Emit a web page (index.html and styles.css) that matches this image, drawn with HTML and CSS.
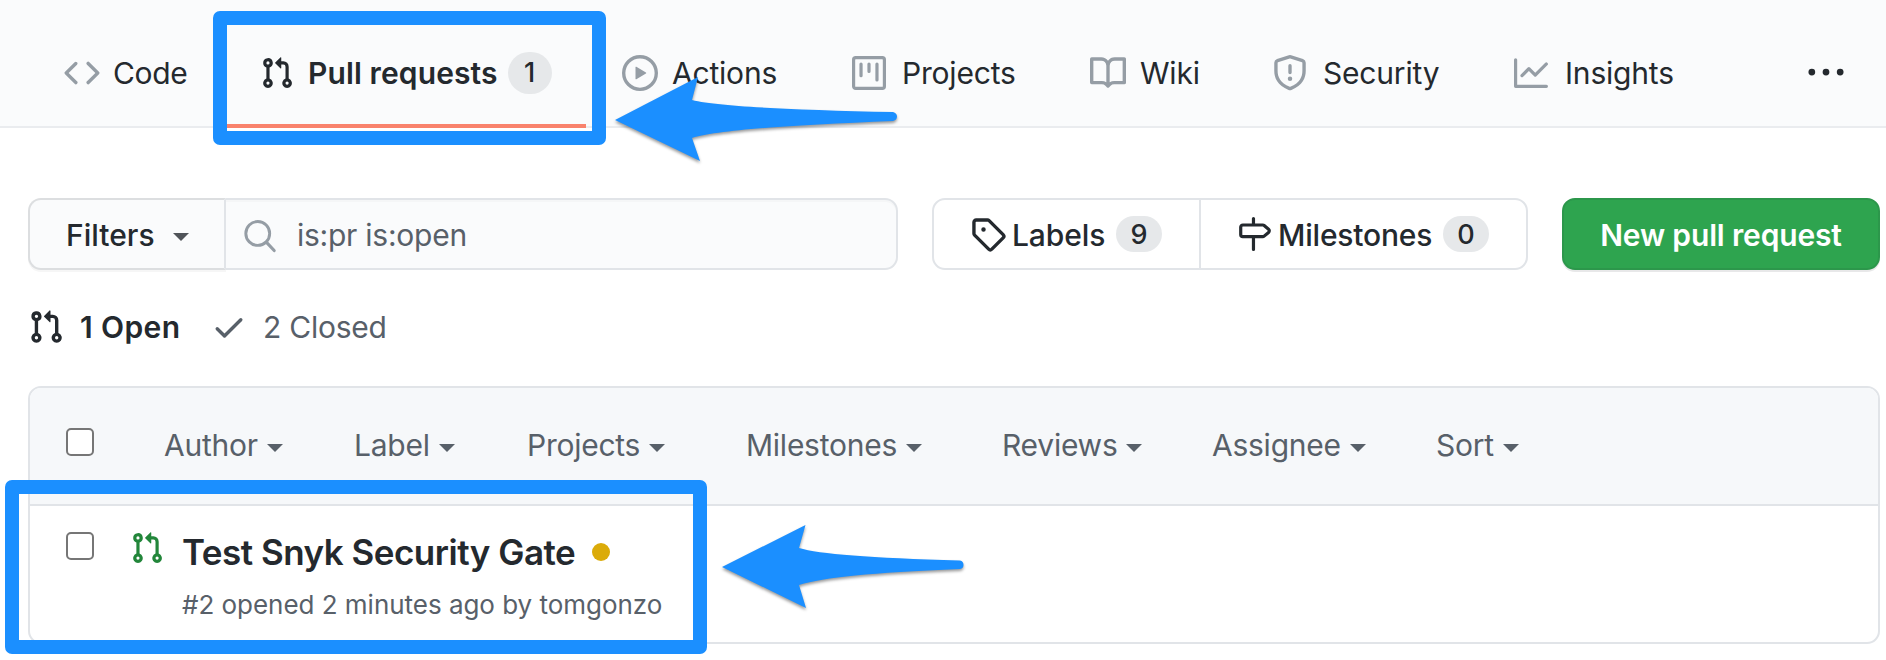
FILE: index.html
```html
<!DOCTYPE html>
<html lang="en">
<head>
<meta charset="utf-8">
<title>Pull requests</title>
<link rel="stylesheet" href="styles.css">
</head>
<body>
<svg width="0" height="0" class="defs" aria-hidden="true">
  <symbol id="pr" viewBox="0 0 16 16"><path fill-rule="evenodd" d="M7.177 3.073L9.573.677A.25.25 0 0110 .854v4.792a.25.25 0 01-.427.177L7.177 3.427a.25.25 0 010-.354zM3.75 2.5a.75.75 0 100 1.5.75.75 0 000-1.5zm-2.25.75a2.25 2.25 0 113 2.122v5.256a2.251 2.251 0 11-1.5 0V5.372A2.25 2.25 0 011.5 3.25zM11 2.5h-1V4h1a1 1 0 011 1v5.628a2.251 2.251 0 101.5 0V5A2.5 2.5 0 0011 2.5zm1 10.25a.75.75 0 111.5 0 .75.75 0 01-1.5 0zM3.75 12a.75.75 0 100 1.5.75.75 0 000-1.5z"/></symbol>
</svg>

<nav class="nav">
  <a class="tab"><svg class="icon" viewBox="0 0 16 16"><path fill-rule="evenodd" d="M4.72 3.22a.75.75 0 011.06 1.06L2.06 8l3.72 3.72a.75.75 0 11-1.06 1.06L.47 8.53a.75.75 0 010-1.06l4.25-4.25zm6.56 0a.75.75 0 10-1.06 1.06L13.94 8l-3.72 3.72a.75.75 0 101.06 1.06l4.25-4.25a.75.75 0 000-1.06l-4.25-4.25z"/></svg><span>Code</span></a>
  <a class="tab tab-current"><svg class="icon icon-sm"><use href="#pr"/></svg><span>Pull requests</span><span class="count">1</span></a>
  <a class="tab"><svg class="icon" viewBox="0 0 16 16"><path fill-rule="evenodd" d="M1.5 8a6.5 6.5 0 1113 0 6.5 6.5 0 01-13 0zM8 0a8 8 0 100 16A8 8 0 008 0zM6.379 5.227A.25.25 0 006 5.442v5.117a.25.25 0 00.379.214l4.264-2.559a.25.25 0 000-.428L6.379 5.227z"/></svg><span>Actions</span></a>
  <a class="tab"><svg class="icon icon-sm" viewBox="0 0 16 16"><path fill-rule="evenodd" d="M1.75 0A1.75 1.75 0 000 1.75v12.5C0 15.216.784 16 1.75 16h12.5A1.75 1.75 0 0016 14.25V1.75A1.75 1.75 0 0014.25 0H1.75zM1.5 1.75a.25.25 0 01.25-.25h12.5a.25.25 0 01.25.25v12.5a.25.25 0 01-.25.25H1.75a.25.25 0 01-.25-.25V1.75zM11.75 3a.75.75 0 00-.75.75v7.5a.75.75 0 001.5 0v-7.5a.75.75 0 00-.75-.75zm-8.25.75a.75.75 0 011.5 0v5.5a.75.75 0 01-1.5 0v-5.5zM8 3a.75.75 0 00-.75.75v3.5a.75.75 0 001.5 0v-3.5A.75.75 0 008 3z"/></svg><span>Projects</span></a>
  <a class="tab"><svg class="icon" viewBox="0 0 16 16"><path fill-rule="evenodd" d="M0 1.75A.75.75 0 01.75 1h4.253c1.227 0 2.317.59 3 1.501A3.744 3.744 0 0111.006 1h4.245a.75.75 0 01.75.75v10.5a.75.75 0 01-.75.75h-4.507a2.25 2.25 0 00-1.591.659l-.622.621a.75.75 0 01-1.06 0l-.622-.621A2.25 2.25 0 005.258 13H.75a.75.75 0 01-.75-.75V1.75zm8.755 3a2.25 2.25 0 012.25-2.25H14.5v9h-3.757c-.71 0-1.4.201-1.992.572l.004-7.322zm-1.504 7.324l.004-5.073-.002-2.253A2.25 2.25 0 005.003 2.5H1.5v9h3.757a3.75 3.75 0 011.994.574z"/></svg><span>Wiki</span></a>
  <a class="tab tab-wide"><svg class="icon" viewBox="0 0 16 16"><path fill-rule="evenodd" d="M7.467.133a1.75 1.75 0 011.066 0l5.25 1.68A1.75 1.75 0 0115 3.48V7c0 1.566-.32 3.182-1.303 4.682-.983 1.498-2.585 2.813-5.032 3.855a1.7 1.7 0 01-1.33 0c-2.447-1.042-4.049-2.357-5.032-3.855C1.32 10.182 1 8.566 1 7V3.48a1.75 1.75 0 011.217-1.667l5.25-1.68zm.61 1.429a.25.25 0 00-.153 0l-5.25 1.68a.25.25 0 00-.174.238V7c0 1.358.275 2.666 1.057 3.86.784 1.194 2.121 2.34 4.366 3.297a.2.2 0 00.154 0c2.245-.956 3.582-2.104 4.366-3.298C13.225 9.666 13.5 8.36 13.5 7V3.48a.25.25 0 00-.174-.237l-5.25-1.68zM9 10.5a1 1 0 11-2 0 1 1 0 012 0zm-.25-5.75a.75.75 0 10-1.5 0v3a.75.75 0 001.5 0v-3z"/></svg><span>Security</span></a>
  <a class="tab tab-wide"><svg class="icon icon-sm" viewBox="0 0 16 16"><path fill-rule="evenodd" d="M1.5 1.75a.75.75 0 00-1.5 0v12.5c0 .414.336.75.75.75h14.5a.75.75 0 000-1.5H1.5V1.75zm14.28 2.53a.75.75 0 00-1.06-1.06L10 7.94 7.53 5.47a.75.75 0 00-1.06 0L3.22 8.72a.75.75 0 001.06 1.06L7 7.06l2.47 2.47a.75.75 0 001.06 0l5.25-5.25z"/></svg><span>Insights</span></a>
  <a class="tab more"><svg class="icon" viewBox="0 0 16 16"><circle cx="1.7" cy="7.6" r="1.5"/><circle cx="8" cy="7.6" r="1.5"/><circle cx="14.3" cy="7.6" r="1.5"/></svg></a>
</nav>

<main class="content">
  <div class="toolbar">
    <div class="search">
      <button class="filters"><span>Filters</span><i class="caret"></i></button>
      <div class="query"><svg class="icon" viewBox="0 0 16 16"><circle cx="7" cy="7.3" r="5.3" fill="none" stroke="currentColor" stroke-width="1.3"/><path d="M10.900 11.300l3.400 3.600" fill="none" stroke="currentColor" stroke-width="1.4" stroke-linecap="round"/></svg><span>is:pr is:open</span></div>
    </div>
    <div class="subnav">
      <a class="sub"><svg class="icon" viewBox="0 0 16 16"><path fill-rule="evenodd" d="M2.5 7.775V2.75a.25.25 0 01.25-.25h5.025a.25.25 0 01.177.073l6.25 6.25a.25.25 0 010 .354l-5.025 5.025a.25.25 0 01-.354 0l-6.25-6.25a.25.25 0 01-.073-.177zm-1.5 0V2.75C1 1.784 1.784 1 2.75 1h5.025c.464 0 .91.184 1.238.513l6.25 6.25a1.75 1.75 0 010 2.474l-5.026 5.026a1.75 1.75 0 01-2.474 0l-6.25-6.25A1.75 1.75 0 011 7.775zM6 5a1 1 0 100 2 1 1 0 000-2z"/></svg><span class="sub-label">Labels</span><span class="count">9</span></a>
      <a class="sub sub-milestones"><svg class="icon icon-sm" viewBox="0 0 16 16"><path fill-rule="evenodd" d="M7.75 0a.75.75 0 01.75.75V3h3.634c.414 0 .814.147 1.13.414l2.07 1.75a1.75 1.75 0 010 2.672l-2.07 1.75a1.75 1.75 0 01-1.13.414H8.5v5.25a.75.75 0 11-1.5 0V10H2.75A1.75 1.75 0 011 8.25v-3.5C1 3.784 1.784 3 2.75 3H7V.75A.75.75 0 017.75 0zm0 8.5h4.384a.25.25 0 00.161-.06l2.07-1.75a.25.25 0 000-.38l-2.07-1.75a.25.25 0 00-.161-.06H2.75a.25.25 0 00-.25.25v3.5c0 .138.112.25.25.25h5z"/></svg><span class="sub-label">Milestones</span><span class="count">0</span></a>
    </div>
    <button class="primary">New pull request</button>
  </div>

  <div class="states">
    <a class="state-open"><svg class="icon"><use href="#pr"/></svg><span>1 Open</span></a>
    <a class="state-closed"><svg class="icon" viewBox="0 0 16 16"><path fill-rule="evenodd" d="M13.78 4.22a.75.75 0 010 1.06l-7.25 7.25a.75.75 0 01-1.06 0L2.22 9.28a.75.75 0 011.06-1.06L6 10.94l6.72-6.72a.75.75 0 011.06 0z"/></svg><span>2 Closed</span></a>
  </div>

  <section class="list">
    <header class="list-head">
      <i class="check"></i>
      <span class="sort">Author<i class="caret"></i></span>
      <span class="sort">Label<i class="caret"></i></span>
      <span class="sort">Projects<i class="caret"></i></span>
      <span class="sort">Milestones<i class="caret"></i></span>
      <span class="sort">Reviews<i class="caret"></i></span>
      <span class="sort">Assignee<i class="caret"></i></span>
      <span class="sort">Sort<i class="caret"></i></span>
    </header>
    <article class="row">
      <i class="check"></i>
      <svg class="icon icon-sm row-icon"><use href="#pr"/></svg>
      <div class="row-text">
        <h3 class="title"><span>Test Snyk Security Gate</span><i class="dot"></i></h3>
        <p class="meta">#2 opened 2 minutes ago by tomgonzo</p>
      </div>
    </article>
  </section>
</main>

<div class="frame frame-tab"></div>
<div class="frame frame-row"></div>
<svg class="arrows" viewBox="0 0 1886 660">
  <path d="M615 120L698 77L692 100C720 107 800 110 893 112Q897 113 897 116.500Q897 120 893 121C800 125 722 129 692 138L700 161Z"/>
  <path d="M722 567L805.500 525L799 548C819 554 870 558 960 560.500Q963.500 561 963.500 565Q963.500 568.500 960 569C870 573 825 577 799 585L806 608Z"/>
</svg>
</body>
</html>
```

FILE: styles.css
```css
* { box-sizing: border-box; }
body {
  margin: 0;
  width: 1886px;
  height: 660px;
  overflow: hidden;
  background: #fff;
  color: #24292e;
  font: 400 30px/36px Inter, "Liberation Sans", sans-serif;
}
.defs { position: absolute; }
.icon { width: 36px; height: 36px; flex: none; fill: currentColor; }
.icon-sm { width: 34px; height: 34px; margin-right: 2px; }

.nav {
  display: grid;
  grid-template-columns: 163px 395px 230px 238px 182px 242px 294px 40px;
  height: 128px;
  padding-left: 64px;
  background: #fafbfc;
  border-bottom: 2px solid #eaecef;
}
.tab { display: flex; align-items: center; gap: 14px; padding-top: 20px; height: 126px; white-space: nowrap; letter-spacing: -.2px; }
.tab .icon { color: #959da5; }
.tab:first-child { gap: 13px; letter-spacing: -.3px; }
.tab-wide { gap: 15px; }
.tab-current {
  width: 359px;
  height: 128px;
  padding: 22px 0 0 33px;
  border-bottom: 4px solid #f9826c;
  font-weight: 600;
  letter-spacing: .12px;
}
.tab-current .icon { margin-right: 0; }
.tab-current .icon, .more .icon { color: #24292e; }
.count {
  width: 44px;
  height: 42px;
  border-radius: 21px;
  background: #e6e8ea;
  font-size: 27px;
  font-weight: 500;
  line-height: 42px;
  text-align: center;
}
.tab-current .count { margin-left: -4px; }

.content { padding: 70px 6px 0 28px; }
.toolbar { display: flex; height: 72px; }
.search { display: flex; width: 870px; }
.filters {
  display: flex;
  align-items: center;
  gap: 18px;
  width: 198px;
  padding: 2px 0 0 36px;
  border: 2px solid #dcdee0;
  border-right-color: #e1e4e8;
  border-radius: 13px 0 0 13px;
  background: #fafbfc;
  box-shadow: 0 2px 0 rgba(27,31,35,.04);
  color: #24292e;
  font: 500 30px/36px Inter, sans-serif;
  letter-spacing: 0;
}
.caret { flex: none; border: 8.5px solid transparent; border-top-color: currentColor; border-bottom: 0; margin-top: 6px; }
.filters .caret { margin-top: 4px; color: #505459; }
.query {
  display: flex;
  flex: 1;
  align-items: center;
  gap: 19px;
  padding: 2px 0 0 16px;
  border: 2px solid #e1e4e8;
  border-left: 0;
  border-radius: 0 13px 13px 0;
  background: #fafbfc;
  box-shadow: inset 0 2px 0 rgba(225,228,232,.2);
  color: #586069;
  letter-spacing: -.25px;
}
.query .icon { color: #959da5; }
.subnav { display: flex; width: 596px; margin-left: 34px; border: 2px solid #e1e4e8; border-radius: 13px; }
.sub { display: flex; align-items: center; padding-left: 36px; width: 265px; font-weight: 500; }
.sub-label { width: 104px; margin: 2px 0 0 6px; letter-spacing: -.1px; }
.sub .count { width: 46px; height: 36px; line-height: 38px; border-radius: 18px; }
.sub-milestones { width: 327px; border-left: 2px solid #e1e4e8; }
.sub-milestones .sub-label { width: 165px; margin-left: 5px; letter-spacing: -.2px; }
.primary {
  width: 318px;
  margin-left: 34px;
  padding: 2px 0 0;
  border: 2px solid #2c974b;
  border-radius: 13px;
  background: #2ea44f;
  box-shadow: 0 2px 0 rgba(27,31,35,.1);
  color: #fff;
  font: 600 30px/36px Inter, sans-serif;
  letter-spacing: -.15px;
}
.states { display: flex; height: 36px; margin-top: 39px; }
.states a { display: flex; align-items: center; gap: 16px; }
.state-open { width: 183px; font-weight: 600; letter-spacing: .4px; }
.state-closed { color: #586069; letter-spacing: -.25px; }

.list { height: 258px; margin-top: 41px; border: 2px solid #e1e4e8; border-radius: 13px; }
.list-head {
  display: grid;
  grid-template-columns: 98px 190px 173px 219px 256px 210px 224px auto;
  height: 118px;
  padding: 40px 0 0 36px;
  border-bottom: 2px solid #e1e4e8;
  border-radius: 11px 11px 0 0;
  background: #f6f8fa;
  color: #586069;
}
.sort { display: flex; align-items: center; gap: 9px; height: 34px; letter-spacing: -.25px; }
.check { width: 28px; height: 28px; border: 2px solid #767676; border-radius: 5px; background: #fff; }
.row { display: flex; padding: 26px 0 0 36px; }
.row-icon { margin: -1px 0 0 36px; color: #22863a; }
.row-text { margin-left: 18px; }
.title { display: flex; align-items: center; gap: 17px; height: 40px; margin: 0; font-size: 35px; font-weight: 600; letter-spacing: -.5px; }
.dot { width: 18px; height: 18px; border-radius: 50%; background: #dbab09; }
.meta { margin: 17px 0 0; color: #586069; font-size: 26px; line-height: 32px; letter-spacing: -.03px; }

.frame { position: absolute; border: 14px solid #1b8fff; border-radius: 7px; }
.frame-tab { left: 213px; top: 11px; width: 393px; height: 134px; }
.frame-row { left: 5px; top: 480px; width: 702px; height: 174px; }
.arrows { position: absolute; left: 0; top: 0; width: 1886px; height: 660px; fill: #1b8fff; filter: drop-shadow(0 2px 1.5px rgba(0,0,0,.4)); }
```
